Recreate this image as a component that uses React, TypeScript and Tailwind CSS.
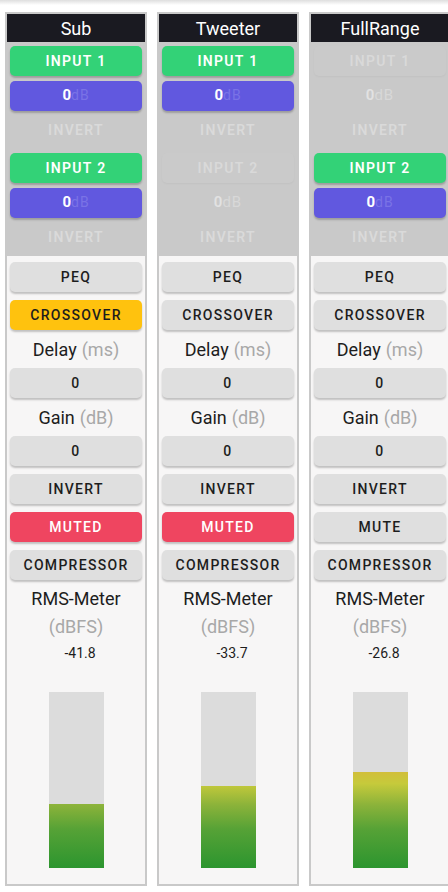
import React from "react";

type Ch = {
  name: string;
  in1: boolean;
  in2: boolean;
  xover: boolean;
  muted: boolean;
  rms: string;
  fill: number;
};

const channels: Ch[] = [
  { name: "Sub", in1: true, in2: true, xover: true, muted: true, rms: "-41.8", fill: 64 },
  { name: "Tweeter", in1: true, in2: false, xover: false, muted: true, rms: "-33.7", fill: 82 },
  { name: "FullRange", in1: false, in2: true, xover: false, muted: false, rms: "-26.8", fill: 96 },
];

const btn =
  "h-[30px] w-full rounded-[5px] flex items-center justify-center text-[14px] font-medium tracking-[1.3px] shadow-[0_2px_2px_rgba(0,0,0,0.22)]";

function InputBlock({ label, active }: { label: string; active: boolean }) {
  return (
    <div className="flex flex-col gap-[4.5px] px-[3px] py-[4px]">
      {active ? (
        <div className={btn + " bg-[#33d277] text-white font-semibold"}>{label}</div>
      ) : (
        <div className="h-[30px] w-full rounded-[5px] flex items-center justify-center text-[14px] font-semibold tracking-[1.3px] bg-[#cacaca] text-[#d9d9d9] shadow-[0_1px_2px_rgba(0,0,0,0.04)]">
          {label}
        </div>
      )}
      {active ? (
        <div className={btn + " bg-[#6158df] text-white"}>
          <span className="font-bold text-[15px] tracking-normal">0</span>
          <span className="text-[#7a73e6] font-normal text-[14px] tracking-[1px]">dB</span>
        </div>
      ) : (
        <div className="h-[30px] w-full flex items-center justify-center text-[15px]">
          <span className="text-[#e2e2e2] font-semibold">0</span>
          <span className="text-[#d8d8d8] font-normal tracking-[1px]">dB</span>
        </div>
      )}
      <div className="h-[30px] w-full flex items-center justify-center text-[14px] font-semibold tracking-[1.3px] text-[#dadada]">
        INVERT
      </div>
    </div>
  );
}

function Gray({ children }: { children: React.ReactNode }) {
  return <div className={btn + " bg-[#dfdfdf] text-[#1d1d1d]"}>{children}</div>;
}

function Label({ t, u }: { t: string; u: string }) {
  return (
    <div className="h-[22px] flex items-center justify-center text-[18px] text-[#1d1d1d]">
      {t}
      <span className="ml-[5px] text-[#a8a8a8]">({u})</span>
    </div>
  );
}

function Column({ c }: { c: Ch }) {
  const h = 176;
  return (
    <div className="w-[142px] shrink-0 border-2 border-[#c9c9c9] bg-[#f7f6f6]">
      <div className="h-[28px] bg-[#1a1a21] text-white text-[18px] flex items-center justify-center">
        {c.name}
      </div>
      <div className="bg-[#c9c9c9] h-[214px]">
        <InputBlock label="INPUT 1" active={c.in1} />
        <InputBlock label="INPUT 2" active={c.in2} />
      </div>
      <div className="px-[3px] pt-[6px] pb-[16px]">
        <div className="flex flex-col gap-[8px]">
          <Gray>PEQ</Gray>
          {c.xover ? (
            <div className={btn + " bg-[#ffc20e] text-[#1d1d1d]"}>CROSSOVER</div>
          ) : (
            <Gray>CROSSOVER</Gray>
          )}
          <Label t="Delay" u="ms" />
          <Gray>0</Gray>
          <Label t="Gain" u="dB" />
          <Gray>0</Gray>
          <Gray>INVERT</Gray>
          {c.muted ? (
            <div className={btn + " bg-[#ef4560] text-white"}>MUTED</div>
          ) : (
            <Gray>MUTE</Gray>
          )}
          <Gray>COMPRESSOR</Gray>
        </div>
        <div className="mt-[5px] text-center text-[18px] leading-[28px] text-[#1d1d1d]">RMS-Meter</div>
        <div className="text-center text-[18px] leading-[28px] text-[#a8a8a8]">(dBFS)</div>
        <div className="mt-[2px] text-center text-[14px] leading-[20px] text-[#1d1d1d] pl-[8px]">{c.rms}</div>
        <div className="mt-[29px] mx-auto w-[55px] h-[176px] bg-[#dcdcdc] flex flex-col justify-end">
          <div
            className="w-full"
            style={{
              height: `${c.fill}px`,
              backgroundImage:
                "linear-gradient(to bottom, #e0a030 0%, #d4bc3a 44%, #c6ca3b 52%, #8cb33a 64%, #56a236 78%, #2c952f 100%)",
              backgroundSize: `100% ${h}px`,
              backgroundPosition: "bottom",
            }}
          />
        </div>
      </div>
    </div>
  );
}

export default function App() {
  return (
    <div
      className="w-[448px] h-[892px] bg-white overflow-hidden"
      style={{ fontFamily: "Roboto, 'Noto Sans', sans-serif" }}
    >
      <div className="h-[5px] bg-gradient-to-b from-[#dedede] to-white" />
      <div className="flex gap-[10px] pl-[5px] pt-[7px]">
        {channels.map((c) => (
          <Column key={c.name} c={c} />
        ))}
      </div>
    </div>
  );
}
